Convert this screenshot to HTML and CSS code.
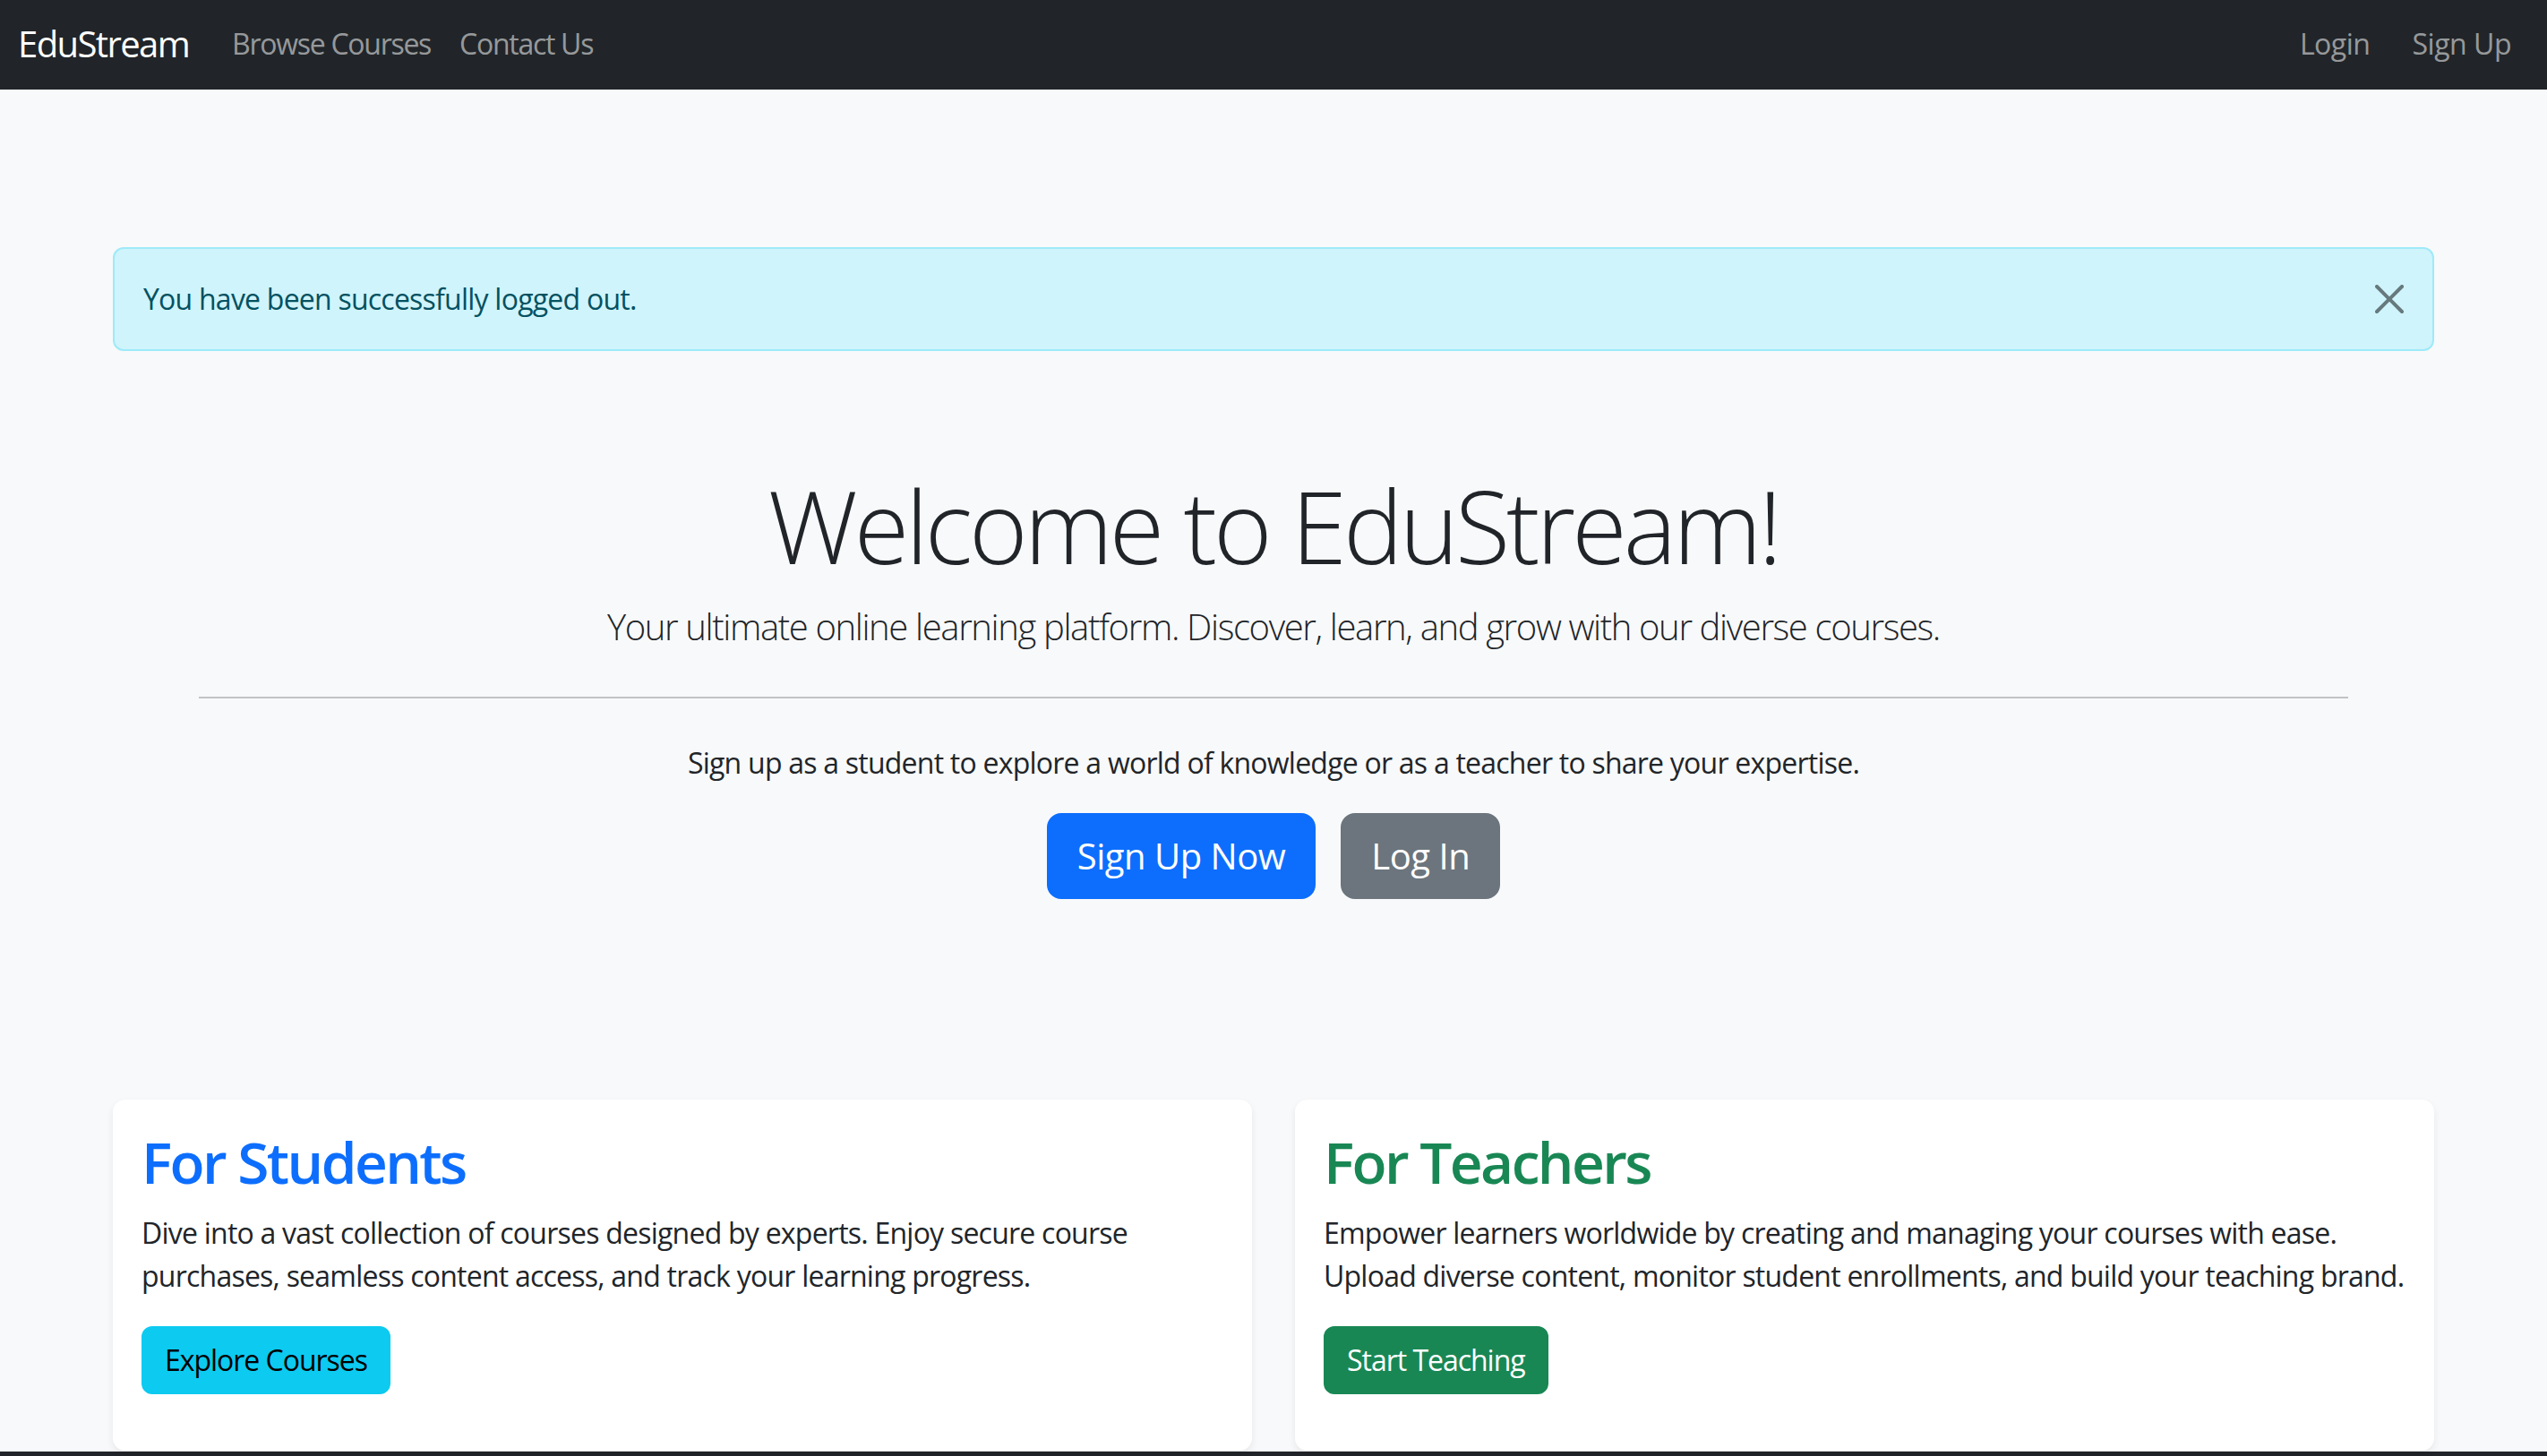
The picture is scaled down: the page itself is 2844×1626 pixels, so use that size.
FILE: index.html
```html
<!DOCTYPE html>
<html lang="en">
<head>
<meta charset="utf-8">
<title>EduStream</title>
<link rel="stylesheet" href="styles.css">
</head>
<body>
<nav class="navbar">
  <div class="nav-left">
    <a class="brand" href="#">EduStream</a>
    <a class="nav-link" href="#">Browse Courses</a>
    <a class="nav-link" href="#">Contact Us</a>
  </div>
  <div class="nav-right">
    <a class="nav-link" href="#">Login</a>
    <a class="nav-link" href="#">Sign Up</a>
  </div>
</nav>

<main class="container">
  <div class="alert">
    <span>You have been successfully logged out.</span>
    <button class="btn-close" aria-label="Close">
      <svg viewBox="0 0 16 16" width="32" height="32"><path d="M.293.293a1 1 0 0 1 1.414 0L8 6.586 14.293.293a1 1 0 1 1 1.414 1.414L9.414 8l6.293 6.293a1 1 0 0 1-1.414 1.414L8 9.414l-6.293 6.293a1 1 0 0 1-1.414-1.414L6.586 8 .293 1.707a1 1 0 0 1 0-1.414z"/></svg>
    </button>
  </div>

  <section class="hero">
    <h1 class="display">Welcome to EduStream!</h1>
    <p class="lead">Your ultimate online learning platform. Discover, learn, and grow with our diverse courses.</p>
    <hr class="divider">
    <p class="hero-text">Sign up as a student to explore a world of knowledge or as a teacher to share your expertise.</p>
    <div class="hero-actions">
      <a class="btn btn-lg btn-primary" href="#">Sign Up Now</a>
      <a class="btn btn-lg btn-secondary" href="#">Log In</a>
    </div>
  </section>

  <div class="cards">
    <div class="card">
      <h2 class="card-title title-primary">For Students</h2>
      <p class="card-text">Dive into a vast collection of courses designed by experts. Enjoy secure course purchases, seamless content access, and track your learning progress.</p>
      <a class="btn btn-info" href="#">Explore Courses</a>
    </div>
    <div class="card">
      <h2 class="card-title title-success">For Teachers</h2>
      <p class="card-text">Empower learners worldwide by creating and managing your courses with ease. Upload diverse content, monitor student enrollments, and build your teaching brand.</p>
      <a class="btn btn-success" href="#">Start Teaching</a>
    </div>
  </div>
</main>

<footer class="footer"></footer>
</body>
</html>
```

FILE: styles.css
```css
* { box-sizing: border-box; }

html, body {
  margin: 0;
  padding: 0;
}

body {
  background: #f8f9fa;
  color: #212529;
  font-family: "Open Sans", "Noto Sans", sans-serif;
  font-size: 32px;
  line-height: 1.5;
  letter-spacing: -0.024em;
}

a { text-decoration: none; }

/* Navbar */
.navbar {
  height: 100px;
  background: #212529;
  display: flex;
  align-items: center;
  justify-content: space-between;
  padding: 0 24px 3px 20px;
}
.nav-left, .nav-right {
  display: flex;
  align-items: center;
}
.brand {
  color: #fff;
  font-size: 40px;
  line-height: 60px;
  margin-right: 32px;
  letter-spacing: -0.04em;
}
.nav-link {
  color: rgba(255, 255, 255, 0.55);
  font-size: 32px;
  line-height: 48px;
  padding: 16px;
  letter-spacing: -0.04em;
}
.nav-right .nav-link { letter-spacing: -0.015em; }
.nav-right .nav-link + .nav-link { margin-left: 15px; }

/* Container */
.container {
  width: 2592px;
  margin: 0 auto;
  padding-top: 176px;
}

/* Alert */
.alert {
  position: relative;
  background: #cff4fc;
  border: 2px solid #9eeaf9;
  color: #055160;
  border-radius: 12px;
  padding: 32px 96px 32px 32px;
  margin-bottom: 32px;
}
.btn-close {
  position: absolute;
  top: 0;
  right: 0;
  width: 96px;
  height: 112px;
  padding: 0;
  border: 0;
  background: transparent;
  display: flex;
  align-items: center;
  justify-content: center;
  opacity: 0.5;
  cursor: pointer;
}
.btn-close svg { fill: #000; display: block; }

/* Hero */
.hero {
  padding: 96px;
  text-align: center;
}
.display {
  font-size: 112px;
  font-weight: 300;
  line-height: 1.2;
  margin: 0 0 16px;
  letter-spacing: -0.035em;
}
.lead {
  font-size: 40px;
  font-weight: 300;
  margin: 0;
  letter-spacing: -0.034em;
}
.divider {
  border: 0;
  border-top: 2px solid #212529;
  opacity: 0.25;
  margin: 48px 0;
}
.hero-text { margin: 0 0 32px; }
.hero-actions {
  display: flex;
  justify-content: center;
  gap: 28px;
}

/* Buttons */
.btn {
  display: inline-block;
  border: 2px solid transparent;
  border-radius: 12px;
  padding: 12px 24px;
  font-size: 32px;
  line-height: 48px;
  text-align: center;
  letter-spacing: -0.032em;
}
.btn-lg {
  padding: 16px 32px;
  font-size: 40px;
  line-height: 60px;
  border-radius: 16px;
  letter-spacing: -0.012em;
}
.btn-primary { background: #0d6efd; border-color: #0d6efd; color: #fff; }
.btn-secondary { background: #6c757d; border-color: #6c757d; color: #fff; }
.btn-info { background: #0dcaf0; border-color: #0dcaf0; color: #000; }
.btn-success { background: #198754; border-color: #198754; color: #fff; }

/* Cards */
.cards {
  display: grid;
  grid-template-columns: 1fr 1fr;
  gap: 48px;
  margin-top: 128px;
  padding-bottom: 1px;
}
.card {
  background: #fff;
  border-radius: 14px;
  box-shadow: 0 4px 8px rgba(0, 0, 0, 0.075);
  padding: 32px 32px 63px;
}
.card-title {
  font-size: 64px;
  font-weight: 600;
  line-height: 1.2;
  margin: 0 0 16px;
  letter-spacing: -0.04em;
}
.title-primary { color: #0d6efd; }
.title-success { color: #198754; }
.card-text { margin: 0 0 32px; }

.footer {
  background: #212529;
  height: 120px;
}
```
